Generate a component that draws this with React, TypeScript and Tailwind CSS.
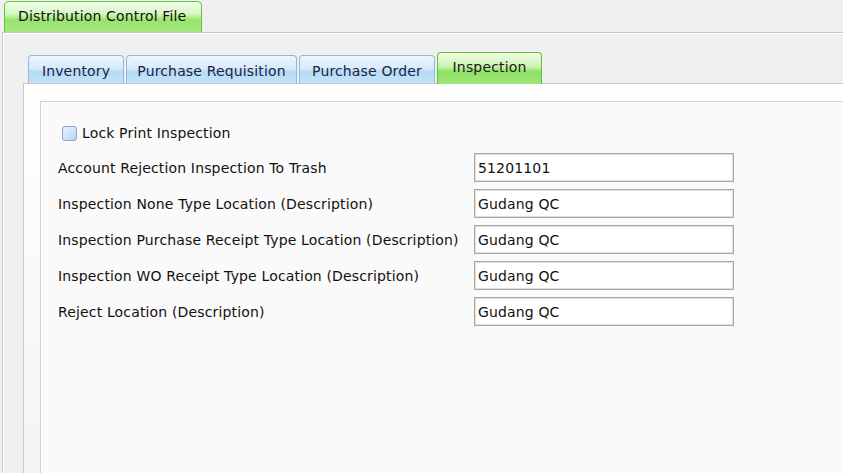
import React from "react";

const font = { fontFamily: '"DejaVu Sans", Tahoma, sans-serif', letterSpacing: "0.15px" };

function InnerTab({ label, selected, w, ml }: { label: string; selected?: boolean; w: number; ml: number }) {
  if (selected) {
    return (
      <div
        className="relative z-10 flex h-[32px] items-center justify-center rounded-t-[4px] border border-b-0 border-[#5cc23a] bg-[linear-gradient(#f1fde9_0%,#c8f2ac_45%,#8fe063_60%,#9fe678_100%)] text-[#1a1a1a]"
        style={{ width: w, marginLeft: ml }}
      >
        <span className="-mt-[4px]">{label}</span>
      </div>
    );
  }
  return (
    <div
      className="flex h-[29px] items-center justify-center rounded-t-[4px] border border-b-0 border-[#8fb6dc] bg-[linear-gradient(#eef6fd_0%,#d7eafa_45%,#b5dbf8_55%,#c5e3fa_100%)] text-[#1c2340]"
      style={{ width: w, marginLeft: ml }}
    >
      <span className="mt-[1px]">{label}</span>
    </div>
  );
}

function Row({ label, value }: { label: string; value: string }) {
  return (
    <div className="flex h-[29px] items-center">
      <div className="w-[416px] whitespace-nowrap text-[#111111]">{label}</div>
      <div className="flex h-[29px] w-[260px] items-center border border-[#a8a8a8] bg-white pl-[3px] text-[#111111] shadow-[inset_0_0_0_1px_#dedede]">
        {value}
      </div>
    </div>
  );
}

export default function App() {
  return (
    <div
      className="flex h-[473px] w-[843px] flex-col overflow-hidden bg-[#f0f0f0] text-[14px] leading-none"
      style={font}
    >
      {/* outer tab strip */}
      <div className="flex h-[32px] shrink-0 items-end pl-[4px]">
        <div className="flex h-[31px] w-[198px] items-center rounded-t-[5px] border border-b-0 border-[#62c63e] bg-[linear-gradient(#f3fdee_0%,#d4f6bd_40%,#98e36c_60%,#a6e882_100%)] pl-[13px] text-[#111111]">
          <span className="-mt-[2px]">Distribution Control File</span>
        </div>
      </div>

      {/* outer panel */}
      <div className="ml-[2px] flex min-h-0 flex-1 flex-col border-l border-t border-[#c8c8c8] bg-[#f0f0f0] pl-[20px] pt-[19px] shadow-[inset_1px_1px_0_#ffffff]">
        {/* inner tab strip */}
        <div className="flex h-[32px] shrink-0 items-end pl-[5px]">
          <InnerTab label="Inventory" w={96} ml={0} />
          <InnerTab label="Purchase Requisition" w={171} ml={2} />
          <InnerTab label="Purchase Order" w={136} ml={2} />
          <InnerTab label="Inspection" w={105} ml={2} selected />
        </div>

        {/* tab page */}
        <div className="-mt-[1px] flex min-h-0 flex-1 flex-col border-l border-t border-[#c8c8c8] bg-[linear-gradient(#ffffff_0%,#f4f4f4_100%)] pl-[16px] pt-[17px]">
          {/* group box */}
          <div className="flex min-h-0 flex-1 flex-col border-l border-t border-[#d0d0d0] bg-[#fafafa] pl-[17px] pt-[23px] shadow-[inset_1px_1px_0_#ffffff]">
            <div className="flex h-[16px] items-center">
              <div className="ml-[4px] h-[15px] w-[15px] rounded-[3px] border border-[#8aa6c6] bg-[linear-gradient(135deg,#e8f2fc_0%,#b9d5f1_100%)]" />
              <span className="ml-[5px] text-[#111111]">Lock Print Inspection</span>
            </div>
            <div className="mt-[12px] flex flex-col gap-[7px]">
              <Row label="Account Rejection Inspection To Trash" value="51201101" />
              <Row label="Inspection None Type Location (Description)" value="Gudang QC" />
              <Row label="Inspection Purchase Receipt Type Location (Description)" value="Gudang QC" />
              <Row label="Inspection WO Receipt Type Location (Description)" value="Gudang QC" />
              <Row label="Reject Location (Description)" value="Gudang QC" />
            </div>
          </div>
        </div>
      </div>
    </div>
  );
}
